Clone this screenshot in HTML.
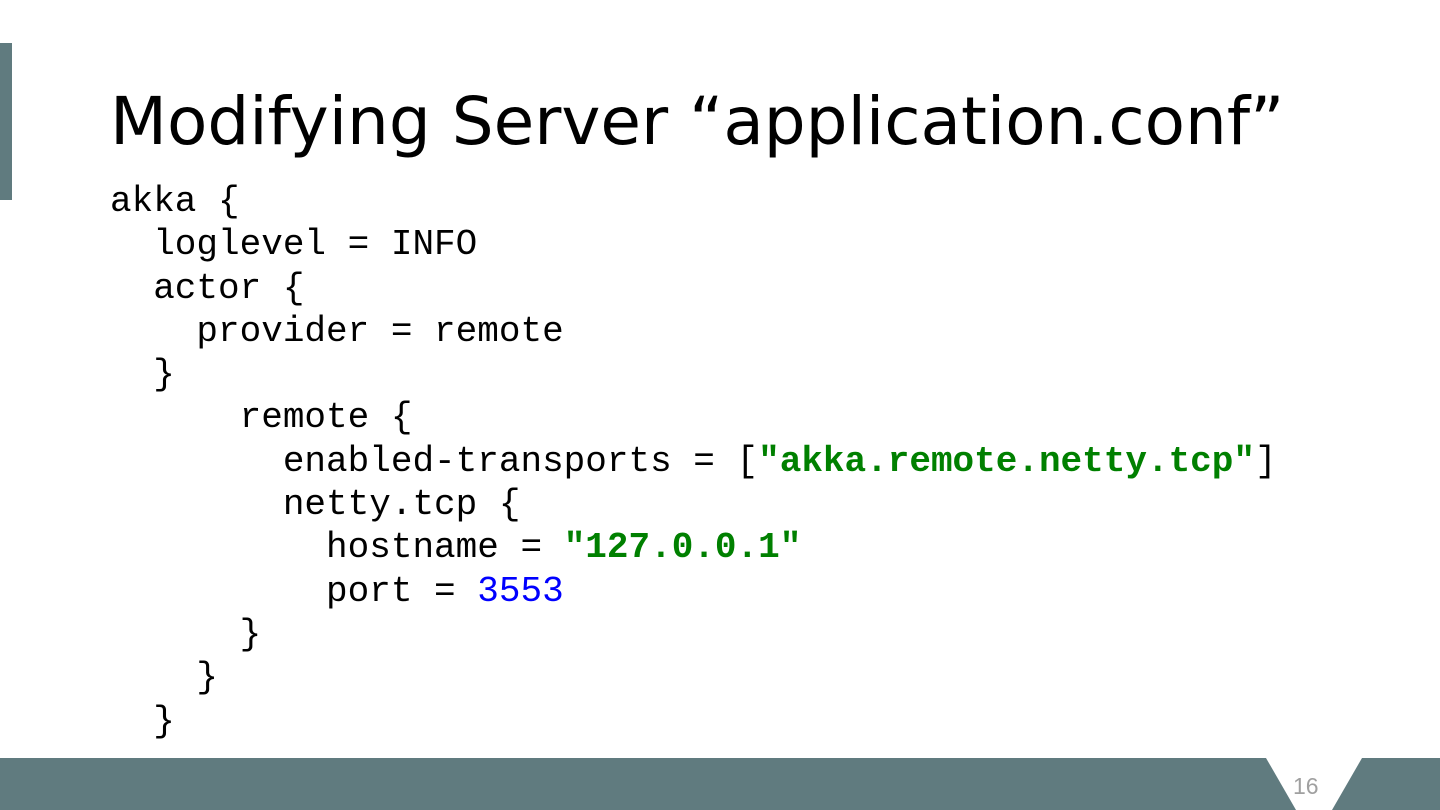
<!DOCTYPE html>
<html><head><meta charset="utf-8"><style>
html,body{margin:0;padding:0}
body{width:1440px;height:810px;position:relative;overflow:hidden;background:#fff}
.bar{position:absolute;left:0;top:43px;width:12px;height:157px;background:#607b7f}
h1{position:absolute;left:110px;top:83px;margin:0;font:400 66px/1.17 "DejaVu Sans","Liberation Sans",sans-serif;color:#000;white-space:nowrap}
pre{position:absolute;left:110px;top:180px;margin:0;font:36px/43.3px "Liberation Mono",monospace;color:#000}
.g{color:#008000;font-weight:bold}
.b{color:#0000ff}
.num{position:absolute;left:1293px;top:773px;font:23px "Liberation Sans",sans-serif;color:#a0a0a0}
</style></head><body>
<div class="bar"></div>
<h1>Modifying Server “application.conf”</h1>
<pre>akka {
  loglevel = INFO
  actor {
    provider = remote
  }
      remote {
        enabled-transports = [<span class="g">"akka.remote.netty.tcp"</span>]
        netty.tcp {
          hostname = <span class="g">"127.0.0.1"</span>
          port = <span class="b">3553</span>
      }
    }
  }</pre>
<svg style="position:absolute;left:0;top:758px" width="1440" height="52">
<polygon points="0,0 1266,0 1296,52 0,52" fill="#607b7f"/>
<polygon points="1362,0 1440,0 1440,52 1332,52" fill="#607b7f"/>
</svg>
<div class="num">16</div>
</body></html>
